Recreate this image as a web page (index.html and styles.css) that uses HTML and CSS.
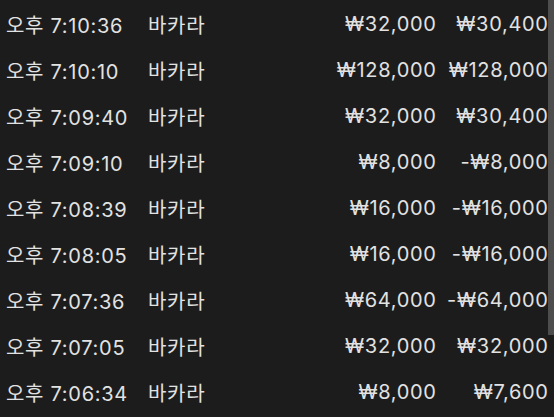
FILE: index.html
```html
<!DOCTYPE html>
<html lang="ko">
<head>
<meta charset="utf-8">
<link rel="stylesheet" href="styles.css">
</head>
<body>
<div class="list">
  <div class="row"><span class="time">오후 7:10:36</span><span class="game">바카라</span><span class="bet">₩32,000</span><span class="win">₩30,400</span></div>
  <div class="row"><span class="time">오후 7:10:10</span><span class="game">바카라</span><span class="bet">₩128,000</span><span class="win">₩128,000</span></div>
  <div class="row"><span class="time">오후 7:09:40</span><span class="game">바카라</span><span class="bet">₩32,000</span><span class="win">₩30,400</span></div>
  <div class="row"><span class="time">오후 7:09:10</span><span class="game">바카라</span><span class="bet">₩8,000</span><span class="win">-₩8,000</span></div>
  <div class="row"><span class="time">오후 7:08:39</span><span class="game">바카라</span><span class="bet">₩16,000</span><span class="win">-₩16,000</span></div>
  <div class="row"><span class="time">오후 7:08:05</span><span class="game">바카라</span><span class="bet">₩16,000</span><span class="win">-₩16,000</span></div>
  <div class="row"><span class="time">오후 7:07:36</span><span class="game">바카라</span><span class="bet">₩64,000</span><span class="win">-₩64,000</span></div>
  <div class="row"><span class="time">오후 7:07:05</span><span class="game">바카라</span><span class="bet">₩32,000</span><span class="win">₩32,000</span></div>
  <div class="row"><span class="time">오후 7:06:34</span><span class="game">바카라</span><span class="bet">₩8,000</span><span class="win">₩7,600</span></div>
</div>
<div class="scroll-thumb"></div>
</body>
</html>
```
FILE: styles.css
```css
html, body {
  margin: 0;
  padding: 0;
  background: #1c1c1c;
  height: 100%;
  overflow: hidden;
}
body {
  font-family: Inter, "Noto Sans CJK KR", sans-serif;
  font-size: 20px;
  letter-spacing: 0.7px;
  color: #e2e2e2;
  position: relative;
}
.list {
  padding: 1px 6px 0 6px;
}
.row {
  display: grid;
  grid-template-columns: 142px 72px 216px 112px;
  height: 46px;
  align-items: center;
  white-space: nowrap;
}
.bet, .win {
  text-align: right;
  margin-right: -0.7px;
}
.scroll-thumb {
  position: absolute;
  top: 0;
  right: 0;
  width: 6px;
  height: 335px;
  background: #4d4d4d;
}
```
